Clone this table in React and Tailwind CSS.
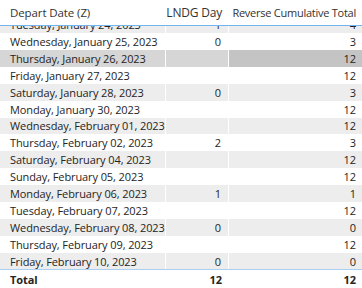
const ROWS = [
  { date: 'Tuesday, January 24, 2023', day: '1', total: '4' },
  { date: 'Wednesday, January 25, 2023', day: '0', total: '3' },
  { date: 'Thursday, January 26, 2023', day: '', total: '12', selected: true },
  { date: 'Friday, January 27, 2023', day: '', total: '12' },
  { date: 'Saturday, January 28, 2023', day: '0', total: '3' },
  { date: 'Monday, January 30, 2023', day: '', total: '12' },
  { date: 'Wednesday, February 01, 2023', day: '', total: '12' },
  { date: 'Thursday, February 02, 2023', day: '2', total: '3' },
  { date: 'Saturday, February 04, 2023', day: '', total: '12' },
  { date: 'Sunday, February 05, 2023', day: '', total: '12' },
  { date: 'Monday, February 06, 2023', day: '1', total: '1' },
  { date: 'Tuesday, February 07, 2023', day: '', total: '12' },
  { date: 'Wednesday, February 08, 2023', day: '0', total: '0' },
  { date: 'Thursday, February 09, 2023', day: '', total: '12' },
  { date: 'Friday, February 10, 2023', day: '0', total: '0' },
]

function Row({ row, index }) {
  const striped = index % 2 === 0
  const base = row.selected ? 'bg-[#d6d6d6]' : striped ? 'bg-[#ededed]' : 'bg-white'
  return (
    <div className="grid grid-cols-[166px_63px_133px] h-[16.9px] items-center">
      <div className={`h-full flex items-center pl-[10px] border-r border-white ${base}`}>{row.date}</div>
      <div className={`h-full flex items-center justify-end pr-[7px] border-r border-white ${base}`}>{row.day}</div>
      <div className={`h-full flex items-center justify-end pr-[6px] ${row.selected ? 'bg-[#c4c4c4]' : base}`}>{row.total}</div>
    </div>
  )
}

export default function App() {
  return (
    <div
      className="w-[362px] h-[288px] bg-white text-[11px] tracking-[-0.1px] leading-none whitespace-nowrap text-[#252423] overflow-hidden flex flex-col"
      style={{ fontFamily: '"Open Sans", sans-serif' }}
    >
      {/* Header */}
      <div className="grid grid-cols-[166px_63px_133px] h-[26px] items-center border-b border-[#74b4ee] text-[#333]">
        <div className="pl-[10px] text-[11.5px]">Depart Date (Z)</div>
        <div className="text-right pr-[7px] text-[12px] tracking-[-0.2px]">LNDG Day</div>
        <div className="text-right pr-[6px] tracking-[-0.25px]">Reverse Cumulative Total</div>
      </div>

      {/* Body */}
      <div className="h-[244px] overflow-hidden border-b border-[#a9d0f3]">
        <div className="-mt-[9.8px]">
          {ROWS.map((r, i) => <Row key={r.date} row={r} index={i} />)}
        </div>
      </div>

      {/* Total */}
      <div className="grid grid-cols-[166px_63px_133px] flex-1 items-center font-bold text-[#252423]">
        <div className="pl-[10px]">Total</div>
        <div className="text-right pr-[7px]">12</div>
        <div className="text-right pr-[6px]">12</div>
      </div>
    </div>
  )
}
